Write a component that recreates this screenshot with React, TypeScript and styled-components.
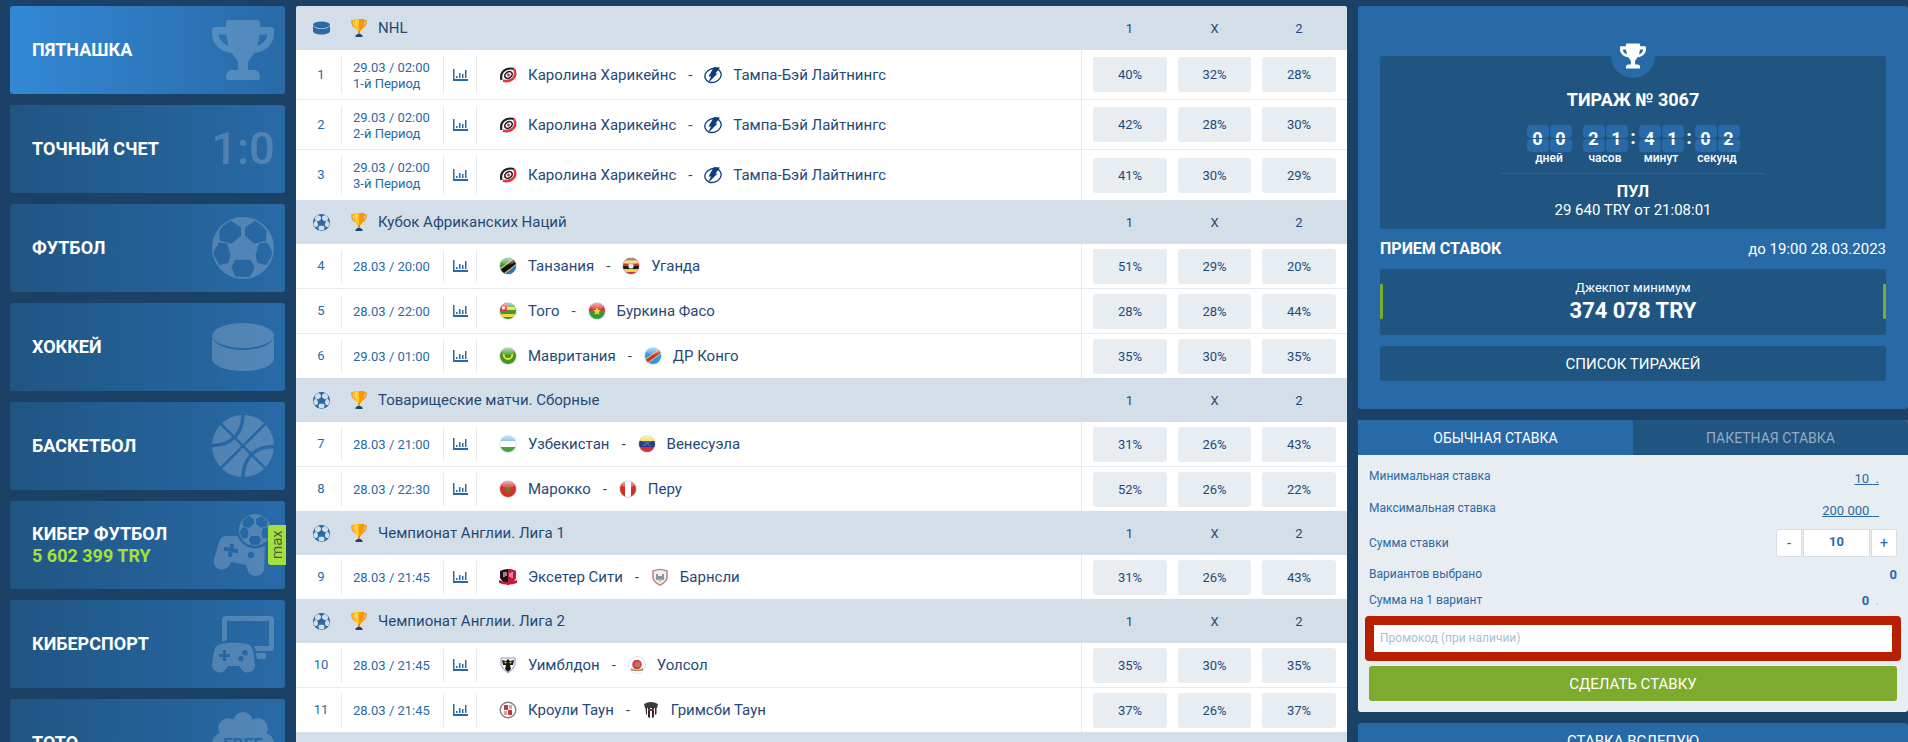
import React, { useId, useState } from "react";
import type { ReactNode } from "react";
import styled, { createGlobalStyle, css } from "styled-components";

const color = {
  page: "#1c4166",
  deep: "#205582",
  blue: "#286aa8",
  bright: "#3388d6",
  ink: "#1f4a78",
  head: "#d4dee8",
  pale: "#e8edf1",
  line: "#e6ebf0",
  lime: "#a4e03b",
  green: "#7dab2e",
  red: "#b81e00",
};

const GlobalStyle = createGlobalStyle`
  *, *::before, *::after { box-sizing: border-box; }
  body {
    margin: 0;
    background: ${color.page};
    font-family: Roboto, "Liberation Sans", sans-serif;
    font-size: 13px;
    color: ${color.ink};
  }
  button, input { font: inherit; color: inherit; margin: 0; }
  button { cursor: pointer; border: 0; padding: 0; }
  a { color: inherit; }
`;

const Page = styled.div`
  display: grid;
  grid-template-columns: 275px minmax(0, 1fr) 550px;
  gap: 11px;
  align-items: start;
  padding: 6px 0 0 10px;
`;

/* ---------- Sidebar ---------- */

const Nav = styled.nav`
  display: flex;
  flex-direction: column;
  gap: 11px;
`;

const NavCard = styled.a<{ $active?: boolean }>`
  position: relative;
  display: flex;
  align-items: center;
  justify-content: space-between;
  height: 88px;
  padding: 0 11px 0 22px;
  border-radius: 3px;
  background: linear-gradient(
    to right,
    ${(p) => (p.$active ? color.bright : color.deep)},
    ${color.blue}
  );
  color: #fff;
  font-size: 18px;
  font-weight: 700;
  line-height: 22px;
  text-decoration: none;
`;

const NavPrize = styled.span`
  display: block;
  color: ${color.lime};
`;

const NavIcon = styled.span`
  display: flex;
  align-items: center;
  justify-content: center;
  width: 62px;
  height: 62px;
  color: rgba(255, 255, 255, 0.2);
`;

const ScoreMark = styled.span`
  font-size: 45px;
  font-weight: 500;
`;

const MaxBadge = styled.span`
  position: absolute;
  right: -1px;
  top: 24px;
  width: 18px;
  height: 40px;
  display: flex;
  align-items: center;
  justify-content: center;
  border-radius: 0 3px 3px 0;
  background: ${color.lime};
  color: #4d5a45;
  font-size: 15px;
  font-weight: 400;
  line-height: 18px;
  writing-mode: vertical-rl;
  transform: rotate(180deg);
`;

/* ---------- Icons ---------- */

const TrophyIcon = ({ width, height }: { width: number; height: number }) => (
  <svg width={width} height={height} viewBox="0 0 62 60" fill="currentColor" aria-hidden>
    <path
      fillRule="evenodd"
      d="M17 0H45Q48 0 48 3V7H59Q62 7 62 10V15C61 25 53 32 42 33C40 37 37 39 36 42V50H42Q48 50 48 58Q48 60 46 60H16Q14 60 14 58Q14 50 20 50H26V42C25 39 22 37 20 33C9 32 1 25 0 15V10Q0 7 3 7H14V3Q14 0 17 0ZM7 14.500V16C8 21 12 24.500 17 26C15.500 22 14.500 18 14.300 14.500ZM55 14.500H47.700C47.500 18 46.500 22 45 26C50 24.500 54 21 55 16Z"
    />
  </svg>
);

const ballPath =
  "M31 0A31 31 0 1 1 30.990 0ZM33 10.300L43 3.800Q51 8 54.700 14L54 23.700L42.300 26.700L33 18.700ZM29 10.300L19 3.800Q11 8 7.300 14L8 23.700L19.700 26.700L29 18.700ZM43.500 38L47 26.500L55 25.500L60 34L59.700 39L54.700 48L45.300 46ZM18.500 38L15 26.500L7 25.500L2 34L2.300 39L7.300 48L16.700 46ZM23.500 42.700H38.500L42.700 50.300L38.500 59.700H23.500L19.300 50.300Z";

const BallIcon = ({ size }: { size: number }) => (
  <svg width={size} height={size} viewBox="0 0 62 62" fill="currentColor" aria-hidden>
    <path fillRule="evenodd" d={ballPath} />
  </svg>
);

const PuckIcon = ({ width, height }: { width: number; height: number }) => (
  <svg width={width} height={height} viewBox="0 0 62 48" fill="currentColor" aria-hidden>
    <ellipse cx="31" cy="12.500" rx="31" ry="12.500" />
    <path d="M0 14.500C3 22 15 27 31 27S59 22 62 14.500V36C61 43 48 48 31 48S1 43 0 36Z" />
  </svg>
);

const BasketballIcon = () => {
  const id = useId();
  return (
    <svg width="62" height="62" viewBox="0 0 62 62" aria-hidden>
      <mask id={id}>
        <circle cx="31" cy="31" r="31" fill="#fff" />
        <g fill="none" stroke="#000">
          <path strokeWidth="2.500" d="M8 8L54 54M54 8L8 54" />
          <path strokeWidth="3.500" d="M31 -1C31 17 21 31 -1 30.500M31 63C31 45 41 31 63 31.500" />
        </g>
      </mask>
      <rect width="62" height="62" fill="currentColor" mask={`url(#${id})`} />
    </svg>
  );
};

const CyberBallIcon = () => {
  const id = useId();
  return (
    <svg width="62" height="62" viewBox="0 0 62 62" aria-hidden>
      <mask id={id}>
        <path
          fill="#fff"
          d="M14 22H26Q40 31 53 32L52 56C51 63 38 64 36 57L34 51L19 48C16 55 12 56 8 55C3 54 1 50 2 45L7 28Q9 22 14 22Z"
        />
        <g fill="#000">
          <circle cx="43" cy="16" r="18.500" />
          <circle cx="39" cy="41" r="3.200" />
          <path d="M17 30h4v4h5v4h-5v5h-4v-5h-5v-4h5Z" transform="rotate(10 19 36)" />
        </g>
      </mask>
      <rect width="62" height="62" fill="currentColor" mask={`url(#${id})`} />
      <g transform="translate(27 0) scale(0.516)">
        <path fill="currentColor" fillRule="evenodd" d={ballPath} />
      </g>
    </svg>
  );
};

const CyberSportIcon = () => (
  <svg width="62" height="62" viewBox="0 0 62 62" fill="currentColor" aria-hidden>
    <path d="M14 3H58Q62 3 62 7V34Q62 38 58 38H44L42 33H57V8H15V27L10 29V7Q10 3 14 3Z" />
    <path d="M44 40H52Q54 40 54 43T52 46H45Z" />
    <path
      fillRule="evenodd"
      d="M9 31Q21 28 35 31Q40 32 41 38L43 52C43 59 34 62 30 57L27 53H16L13 57C9 62 0 59 0 52L2 38Q3 32 9 31ZM11 37V41H7V44H11V48H14V44H18V41H14V37ZM33 37A2.800 2.800 0 1 0 33.010 37ZM29 43A2.800 2.800 0 1 0 29.010 43Z"
    />
  </svg>
);

const FreeText = styled.text`
  font-size: 17px;
  font-weight: 900;
`;

const FreeIcon = () => {
  const id = useId();
  const lobes = Array.from({ length: 8 }, (_, i) => {
    const a = (i * Math.PI) / 4 - Math.PI / 2;
    return { x: 31 + 21 * Math.cos(a), y: 31 + 21 * Math.sin(a) };
  });
  return (
    <svg width="62" height="62" viewBox="0 0 62 62" aria-hidden>
      <mask id={id}>
        <circle cx="31" cy="31" r="25" fill="#fff" />
        {lobes.map((l, i) => (
          <circle key={i} cx={l.x} cy={l.y} r="10" fill="#fff" />
        ))}
        <FreeText x="31" y="38" textAnchor="middle" fill="#000">
          FREE
        </FreeText>
      </mask>
      <rect width="62" height="62" fill="currentColor" mask={`url(#${id})`} />
    </svg>
  );
};

const CupIcon = () => (
  <svg width="16" height="18" viewBox="0 0 16 18" aria-hidden>
    <path d="M3.500 2H1Q.5 7 5.500 9M12.500 2H15Q15.500 7 10.500 9" fill="none" stroke="#f79a10" strokeWidth="1.500" />
    <path d="M2.500 0H8V12.500H7Q2.500 9 2.500 0Z" fill="#ffc61a" />
    <path d="M8 0H13.500Q13.500 9 9 12.500H8Z" fill="#ff9500" />
    <path d="M4.500 1.500H6Q5.500 6 7 9Q4.700 6 4.500 1.500Z" fill="#ffe680" />
    <path d="M7 12H9V15H7Z" fill="#f08a00" />
    <path d="M4.500 18V16.500L6.500 15H9.500L11.500 16.500V18Z" fill="#1f4573" />
  </svg>
);

const ChartIcon = () => (
  <svg width="15" height="12" viewBox="0 0 15 12" fill={color.blue} aria-hidden>
    <path d="M0 0H1.500V10H15V12H0ZM3 7H4.500V9H3ZM6 4H7.500V9H6ZM9 5H10.500V9H9ZM12 1H13.500V9H12Z" />
  </svg>
);

/* ---------- Team marks ---------- */

type Mark = { plain?: boolean; art: ReactNode };

const marks: Record<string, Mark> = {
  "Каролина Харикейнс": {
    plain: true,
    art: (
      <g fill="none">
        <path d="M2.500 14Q.5 6 8 3Q12 2 15 3" stroke="#222" strokeWidth="2.200" />
        <path d="M15 3Q18.500 10 12 14Q8 16 4 14.500" stroke="#e03a3e" strokeWidth="2.600" />
        <ellipse cx="9.500" cy="9" rx="4" ry="3" stroke="#222" strokeWidth="1.600" transform="rotate(-35 9.500 9)" />
        <circle cx="9.500" cy="9" r="1.600" fill="#e03a3e" />
      </g>
    ),
  },
  "Тампа-Бэй Лайтнингс": {
    plain: true,
    art: (
      <g>
        <ellipse cx="9" cy="9.500" rx="8.300" ry="6.800" fill="#fff" stroke="#0b3c7d" strokeWidth="1.300" transform="rotate(-20 9 9.500)" />
        <path d="M10 1L16 1.500L11.500 7.500H13.500L4 17L7 10.500H4.500Z" fill="#0b3c7d" />
      </g>
    ),
  },
  Танзания: {
    art: (
      <g>
        <rect width="18" height="18" fill="#3f9b3f" />
        <path d="M18 3V18H3Z" fill="#2f6fbf" />
        <path d="M0 17L18 3" stroke="#f4d63c" strokeWidth="7" />
        <path d="M0 17L18 3" stroke="#111" strokeWidth="5" />
      </g>
    ),
  },
  Уганда: {
    art: (
      <g>
        <rect width="18" height="18" fill="#d8302c" />
        <path d="M0 0H18V3.500H0ZM0 9H18V12H0Z" fill="#1b1b1b" />
        <path d="M0 3.500H18V6.500H0ZM0 12H18V15H0Z" fill="#f5d038" />
        <circle cx="9" cy="9" r="2.600" fill="#eee" />
      </g>
    ),
  },
  Того: {
    art: (
      <g>
        <rect width="18" height="18" fill="#3e9a35" />
        <path d="M0 5H18V8H0ZM0 12H18V15H0Z" fill="#f4d93c" />
        <path d="M0 0H8V9H0Z" fill="#df3540" />
        <circle cx="4.500" cy="6" r="1.500" fill="#fff" />
      </g>
    ),
  },
  "Буркина Фасо": {
    art: (
      <g>
        <rect width="18" height="9" fill="#d8302c" />
        <rect y="9" width="18" height="9" fill="#379a34" />
        <path d="M9 5L10.200 8H13L10.700 10L11.600 13L9 11.200L6.400 13L7.300 10L5 8H7.800Z" fill="#f8d836" />
      </g>
    ),
  },
  Мавритания: {
    art: (
      <g>
        <rect width="18" height="18" fill="#3f9a1e" />
        <path d="M4.500 7Q5 12 9 12T13.500 7" fill="none" stroke="#f0e03a" strokeWidth="1.800" />
      </g>
    ),
  },
  "ДР Конго": {
    art: (
      <g>
        <rect width="18" height="18" fill="#2b9bea" />
        <path d="M0 16L18 3" stroke="#f5d83d" strokeWidth="5" />
        <path d="M0 16L18 3" stroke="#d52b35" strokeWidth="3.400" />
      </g>
    ),
  },
  Узбекистан: {
    art: (
      <g>
        <rect width="18" height="18" fill="#fff" />
        <rect width="18" height="6" fill="#6fb3e0" />
        <rect y="12" width="18" height="6" fill="#4ca33c" />
      </g>
    ),
  },
  Венесуэла: {
    art: (
      <g>
        <rect width="18" height="18" fill="#f6d23a" />
        <rect y="6" width="18" height="6" fill="#233f91" />
        <rect y="12" width="18" height="6" fill="#d5303a" />
        <path d="M6 10.500Q9 7 12 10.500" fill="none" stroke="#fff" strokeWidth=".7" strokeDasharray="1 .6" />
      </g>
    ),
  },
  Марокко: {
    art: (
      <g>
        <rect width="18" height="18" fill="#d3302c" />
        <path d="M9 5.500L10.200 8.500H13L10.700 10.300L11.600 13.300L9 11.500L6.400 13.300L7.300 10.300L5 8.500H7.800Z" fill="#4f8a2a" />
      </g>
    ),
  },
  Перу: {
    art: (
      <g>
        <rect width="18" height="18" fill="#d52b25" />
        <rect x="6" width="6" height="18" fill="#fff" />
      </g>
    ),
  },
  "Эксетер Сити": {
    plain: true,
    art: (
      <g>
        <path d="M1 3Q9 -1 17 3V10Q14 15 9 17Q4 15 1 10Z" fill="#1a1418" />
        <path d="M9 1.500Q13 1 17 3V10Q14 15 9 17Z" fill="#c8163c" />
        <path d="M5 4V9M7 4V8M11 5V9M13 4V10" stroke="#e8d8dc" strokeWidth="1.200" />
        <path d="M0 12Q9 16 18 12V15Q9 18 0 15Z" fill="#c8163c" />
      </g>
    ),
  },
  Барнсли: {
    plain: true,
    art: (
      <g>
        <path d="M2 3Q9 0 16 3V10Q14 15 9 17Q4 15 2 10Z" fill="#f2f0f2" stroke="#b98a90" strokeWidth="1.600" />
        <path d="M5 6H7V8H11V6H13V12H5Z" fill="#8a94a4" />
        <path d="M6 11H12L9 14Z" fill="#d8b64a" />
      </g>
    ),
  },
  Уимблдон: {
    plain: true,
    art: (
      <g>
        <path d="M2 2H16V9Q14 14 9 17Q4 14 2 9Z" fill="#fff" stroke="#8d98a8" />
        <path d="M9 3L11 5L15 4L14 9L11 9L12 13L9 16L6 13L7 9L4 9L3 4L7 5Z" fill="#16161c" />
        <circle cx="6.500" cy="6.500" r="1" fill="#e8cf3a" />
        <circle cx="11.500" cy="6.500" r="1" fill="#e8cf3a" />
      </g>
    ),
  },
  Уолсол: {
    plain: true,
    art: (
      <g>
        <circle cx="9" cy="9" r="8.500" fill="#fff" stroke="#dde3ea" />
        <circle cx="9" cy="8.500" r="4.800" fill="#e03850" />
        <circle cx="9.500" cy="8.500" r="2.600" fill="#a88462" />
        <path d="M3 12Q9 15 15 12V14.500Q9 16 3 14.500Z" fill="#a9985c" />
      </g>
    ),
  },
  "Кроули Таун": {
    plain: true,
    art: (
      <g>
        <circle cx="9" cy="9" r="7.800" fill="#fff" stroke="#8a7f84" strokeWidth="1.400" />
        <path d="M5 4H9V9H5ZM9 9H13V14H9Z" fill="#c43a3c" />
        <path d="M10 4H13V8H10ZM5 10H8V14H5Z" fill="#d8a0a0" />
      </g>
    ),
  },
  "Гримсби Таун": {
    plain: true,
    art: (
      <g>
        <path d="M2 3Q9 -1 16 3L15 7H3Z" fill="#3b3b3f" />
        <path d="M3.500 7H5V14L4 13ZM6 7H8V17L6 16ZM10 7H12V16L10 17ZM13 7H14.500V13L13 14Z" fill="#2d2a2e" />
        <path d="M6 8H12V10H6Z" fill="#8e2a3c" />
      </g>
    ),
  },
};

const TeamMark = ({ team }: { team: string }) => {
  const id = useId();
  const mark = marks[team];
  return (
    <svg width="18" height="18" viewBox="0 0 18 18" aria-hidden>
      <clipPath id={`${id}c`}>
        <circle cx="9" cy="9" r="8" />
      </clipPath>
      <linearGradient id={`${id}g`} x1="0" y1="0" x2="0" y2="1">
        <stop offset="0" stopColor="#fff" stopOpacity=".7" />
        <stop offset="1" stopColor="#fff" stopOpacity=".1" />
      </linearGradient>
      {mark.plain ? (
        mark.art
      ) : (
        <g>
          <circle cx="9" cy="9" r="9" fill="#dfe5ea" />
          <g clipPath={`url(#${id}c)`}>
            {mark.art}
            <ellipse cx="9" cy="4" rx="7" ry="4" fill={`url(#${id}g)`} />
          </g>
        </g>
      )}
    </svg>
  );
};

/* ---------- Match table ---------- */

const Matches = styled.table`
  width: 100%;
  table-layout: fixed;
  border-collapse: separate;
  border-spacing: 0;
  border-radius: 3px 3px 0 0;
  overflow: hidden;
  background: #fff;
`;

const Col = styled.col<{ $w?: number }>`
  width: ${(p) => (p.$w ? `${p.$w}px` : "auto")};
`;

const GroupRow = styled.tr`
  height: 44px;
  background: ${color.head};
`;

const GroupHead = styled.th`
  padding: 0 0 0 17px;
  text-align: left;
  font-weight: 400;
`;

const GroupTitle = styled.div`
  display: grid;
  grid-template-columns: 17px 16px 1fr;
  column-gap: 12px;
  align-items: center;
  font-size: 15px;
  line-height: 20px;

  > :first-child {
    color: ${color.blue};
  }
  > :nth-child(2) {
    justify-self: end;
    margin-right: -9px;
  }
  > :last-child {
    padding-left: 8px;
  }
`;

const cellSides = css`
  padding: 0 0 0 11px;
  &:last-child {
    padding-right: 11px;
  }
`;

const OutcomeHead = styled.th`
  ${cellSides}
  font-weight: 400;
`;

const MatchRow = styled.tr<{ $tall?: boolean }>`
  height: ${(p) => (p.$tall ? 50 : 45)}px;

  &:last-child {
    height: ${(p) => (p.$tall ? 50 : 44)}px;
  }
  &:not(:last-child) > td {
    border-bottom: 1px solid ${color.line};
  }
`;

const Cell = styled.td`
  padding: 0;
`;

const Inset = styled.div<{ $tall?: boolean }>`
  display: flex;
  align-items: center;
  height: ${(p) => (p.$tall ? 38 : 33)}px;
  border-right: 1px solid ${color.line};
  color: ${color.blue};
  line-height: 16px;
`;

const NumberInset = styled(Inset)`
  justify-content: center;
  padding-left: 5px;
`;

const DateInset = styled(Inset)`
  padding: 2px 0 0 11px;
`;

const StatsButton = styled.button`
  display: flex;
  margin: 0 auto;
  background: none;
`;

const Pair = styled.div`
  display: flex;
  align-items: center;
  padding-left: 22px;
  font-size: 15px;
  line-height: 20px;
  white-space: nowrap;
`;

const TeamName = styled.span`
  margin-left: 11px;
`;

const Dash = styled.span`
  width: 28px;
  text-align: center;
`;

const OddsCell = styled.td`
  ${cellSides}
  &:nth-child(5) {
    border-left: 1px solid ${color.line};
  }
`;

const OddsButton = styled.button`
  display: block;
  width: 100%;
  height: 35px;
  border-radius: 3px;
  background: ${color.pale};
`;

type Match = { date: string; period?: string; home: string; away: string; odds: [number, number, number] };
type Group = { title: string; puck?: boolean; first: number; matches: Match[] };

const nhl = (period: string, odds: [number, number, number]): Match => ({
  date: "29.03 / 02:00",
  period,
  home: "Каролина Харикейнс",
  away: "Тампа-Бэй Лайтнингс",
  odds,
});

const groups: Group[] = [
  {
    title: "NHL",
    puck: true,
    first: 1,
    matches: [nhl("1-й Период", [40, 32, 28]), nhl("2-й Период", [42, 28, 30]), nhl("3-й Период", [41, 30, 29])],
  },
  {
    title: "Кубок Африканских Наций",
    first: 4,
    matches: [
      { date: "28.03 / 20:00", home: "Танзания", away: "Уганда", odds: [51, 29, 20] },
      { date: "28.03 / 22:00", home: "Того", away: "Буркина Фасо", odds: [28, 28, 44] },
      { date: "29.03 / 01:00", home: "Мавритания", away: "ДР Конго", odds: [35, 30, 35] },
    ],
  },
  {
    title: "Товарищеские матчи. Сборные",
    first: 7,
    matches: [
      { date: "28.03 / 21:00", home: "Узбекистан", away: "Венесуэла", odds: [31, 26, 43] },
      { date: "28.03 / 22:30", home: "Марокко", away: "Перу", odds: [52, 26, 22] },
    ],
  },
  {
    title: "Чемпионат Англии. Лига 1",
    first: 9,
    matches: [{ date: "28.03 / 21:45", home: "Эксетер Сити", away: "Барнсли", odds: [31, 26, 43] }],
  },
  {
    title: "Чемпионат Англии. Лига 2",
    first: 10,
    matches: [
      { date: "28.03 / 21:45", home: "Уимблдон", away: "Уолсол", odds: [35, 30, 35] },
      { date: "28.03 / 21:45", home: "Кроули Таун", away: "Гримсби Таун", odds: [37, 26, 37] },
    ],
  },
];

const MatchTable = () => (
  <Matches>
    <colgroup>
      <Col $w={46} />
      <Col $w={102} />
      <Col $w={33} />
      <Col />
      <Col $w={86} />
      <Col $w={84} />
      <Col $w={96} />
    </colgroup>
    {groups.map((g) => (
      <tbody key={g.title}>
        <GroupRow>
          <GroupHead colSpan={4} scope="colgroup">
            <GroupTitle>
              {g.puck ? <PuckIcon width={17} height={14} /> : <BallIcon size={17} />}
              <CupIcon />
              <span>{g.title}</span>
            </GroupTitle>
          </GroupHead>
          <OutcomeHead scope="col">1</OutcomeHead>
          <OutcomeHead scope="col">X</OutcomeHead>
          <OutcomeHead scope="col">2</OutcomeHead>
        </GroupRow>
        {g.matches.map((m, i) => {
          const tall = Boolean(m.period);
          return (
            <MatchRow key={i} $tall={tall}>
              <Cell>
                <NumberInset $tall={tall}>{g.first + i}</NumberInset>
              </Cell>
              <Cell>
                <DateInset $tall={tall}>
                  <div>
                    {m.date}
                    {m.period && <div>{m.period}</div>}
                  </div>
                </DateInset>
              </Cell>
              <Cell>
                <Inset $tall={tall}>
                  <StatsButton type="button" aria-label="Статистика">
                    <ChartIcon />
                  </StatsButton>
                </Inset>
              </Cell>
              <Cell>
                <Pair>
                  <TeamMark team={m.home} />
                  <TeamName>{m.home}</TeamName>
                  <Dash>-</Dash>
                  <TeamMark team={m.away} />
                  <TeamName>{m.away}</TeamName>
                </Pair>
              </Cell>
              {m.odds.map((o, k) => (
                <OddsCell key={k}>
                  <OddsButton type="button">{o}%</OddsButton>
                </OddsCell>
              ))}
            </MatchRow>
          );
        })}
      </tbody>
    ))}
    <tbody>
      <GroupRow>
        <GroupHead colSpan={7} />
      </GroupRow>
    </tbody>
  </Matches>
);

/* ---------- Right column ---------- */

const Aside = styled.aside`
  display: flex;
  flex-direction: column;
  gap: 11px;
`;

const DrawCard = styled.section`
  display: flex;
  flex-direction: column;
  padding: 50px 22px 28px;
  border-radius: 3px;
  background: ${color.blue};
  color: #fff;
`;

const DrawBox = styled.div`
  position: relative;
  display: flex;
  flex-direction: column;
  align-items: center;
  height: 173px;
  padding-top: 33px;
  border-radius: 3px;
  background: ${color.deep};
`;

const DrawMedal = styled.span`
  position: absolute;
  top: -22px;
  left: 50%;
  display: flex;
  align-items: center;
  justify-content: center;
  width: 44px;
  height: 44px;
  margin-left: -22px;
  border-radius: 50%;
  background: ${color.blue};
`;

const DrawTitle = styled.h2`
  margin: 0;
  font-size: 18px;
  line-height: 22px;
`;

const Countdown = styled.div`
  display: flex;
  margin-top: 14px;
`;

const Unit = styled.div`
  display: grid;
  grid-template-columns: 22px 22px;
  column-gap: 1px;
  justify-items: center;
  font-size: 12px;
  font-weight: 500;
  line-height: 13px;
`;

const UnitLabel = styled.span`
  grid-column: 1 / -1;
`;

const Separator = styled.span`
  width: 11px;
  text-align: center;
  font-size: 20px;
  font-weight: 700;
  line-height: 24px;
`;

const Tile = styled.span`
  position: relative;
  display: grid;
  grid-template-rows: 13px 13px;
  row-gap: 1px;
  width: 22px;

  &::before,
  &::after {
    content: "";
    grid-column: 1;
    border-radius: 4px;
    background: ${color.blue};
  }
`;

const Digit = styled.span`
  position: absolute;
  inset: 0;
  text-align: center;
  font-size: 18px;
  font-weight: 700;
  line-height: 27px;
  z-index: 1;

  &::after {
    content: "";
    position: absolute;
    inset: 13px 0 auto;
    height: 1px;
    background: ${color.deep};
  }
`;

const Pool = styled.div`
  width: 264px;
  margin-top: 8px;
  padding-top: 9px;
  border-top: 1px solid #36618c;
  text-align: center;
  font-size: 15px;
  line-height: 18px;
`;

const Deadline = styled.div`
  display: flex;
  justify-content: space-between;
  padding: 11px 0;
  font-size: 15px;
  line-height: 18px;
`;

const Strong = styled.strong`
  font-size: 16px;
`;

const Jackpot = styled.div`
  position: relative;
  height: 66px;
  padding-top: 9px;
  border-radius: 3px;
  background: ${color.deep};
  text-align: center;
  line-height: 20px;

  &::before,
  &::after {
    content: "";
    position: absolute;
    top: 15px;
    left: 0;
    width: 3px;
    height: 35px;
    border-radius: 1px;
    background: ${color.green};
  }
  &::after {
    left: auto;
    right: 0;
  }
`;

const JackpotSum = styled.strong`
  display: block;
  font-size: 22px;
  line-height: 26px;
`;

const DrawListButton = styled.button`
  height: 35px;
  margin-top: 11px;
  border-radius: 3px;
  background: ${color.deep};
  color: #fff;
  font-size: 15px;
`;

const BetCard = styled.section`
  overflow: hidden;
  border-radius: 3px;
  background: ${color.pale};
`;

const Tabs = styled.div`
  display: grid;
  grid-template-columns: 1fr 1fr;
`;

const Tab = styled.button<{ $active?: boolean }>`
  height: 35px;
  background: ${(p) => (p.$active ? color.blue : color.deep)};
  color: ${(p) => (p.$active ? "#fff" : "#94abc1")};
  font-size: 14px;
`;

const BetForm = styled.form`
  display: flex;
  flex-direction: column;
  padding: 5px 11px 11px;
  color: ${color.blue};
  font-size: 12px;
`;

const BetLine = styled.div<{ $h: number }>`
  display: flex;
  align-items: center;
  justify-content: space-between;
  height: ${(p) => p.$h}px;
`;

const LimitLink = styled.a`
  padding-top: 5px;
  margin-right: 18px;
  color: ${color.blue};
  font-size: 13px;
  white-space: pre;
`;

const Stepper = styled.div`
  display: grid;
  grid-template-columns: 26px 67px 26px;
  gap: 1px;
  height: 28px;
`;

const StepButton = styled.button<{ $side: "left" | "right" }>`
  border: 1px solid ${color.head};
  border-radius: ${(p) => (p.$side === "left" ? "3px 0 0 3px" : "0 3px 3px 0")};
  background: #fff;
  font-size: 15px;
  line-height: 18px;
`;

const StakeInput = styled.input`
  width: 100%;
  padding: 0 0 3px;
  border: 1px solid ${color.head};
  background: #fff;
  text-align: center;
  font-size: 13px;
  font-weight: 700;
`;

const Value = styled.strong<{ $inset?: boolean }>`
  font-size: 13px;
  margin-right: ${(p) => (p.$inset ? 18 : 0)}px;
  white-space: pre;
`;

const Faint = styled.span`
  color: #b9c3d6;
  font-weight: 400;
`;

const PromoInput = styled.input`
  height: 45px;
  margin: 3px -4px 5px;
  padding: 0 6px 2px;
  border: 9px solid ${color.red};
  border-radius: 4px;
  outline: 0;
  background: #fff;

  &::placeholder {
    color: #a9c0d6;
    opacity: 1;
  }
`;

const SubmitButton = styled.button`
  height: 35px;
  border-radius: 3px;
  background: ${color.green};
  color: #fff;
  font-size: 15px;
`;

const BlindButton = styled.button`
  height: 36px;
  border-radius: 3px;
  background: ${color.blue};
  color: #fff;
  font-size: 15px;
`;

const TimeUnit = ({ value, label }: { value: string; label: string }) => (
  <Unit>
    {[...value].map((d, i) => (
      <Tile key={i}>
        <Digit>{d}</Digit>
      </Tile>
    ))}
    <UnitLabel>{label}</UnitLabel>
  </Unit>
);

const DrawPanel = () => (
  <DrawCard>
    <DrawBox>
      <DrawMedal>
        <TrophyIcon width={26} height={26} />
      </DrawMedal>
      <DrawTitle>ТИРАЖ № 3067</DrawTitle>
      <Countdown>
        <TimeUnit value="00" label="дней" />
        <Separator />
        <TimeUnit value="21" label="часов" />
        <Separator>:</Separator>
        <TimeUnit value="41" label="минут" />
        <Separator>:</Separator>
        <TimeUnit value="02" label="секунд" />
      </Countdown>
      <Pool>
        <Strong>ПУЛ</Strong>
        <div>29 640 TRY от 21:08:01</div>
      </Pool>
    </DrawBox>
    <Deadline>
      <Strong>ПРИЕМ СТАВОК</Strong>
      <span>до 19:00 28.03.2023</span>
    </Deadline>
    <Jackpot>
      Джекпот минимум
      <JackpotSum>374 078 TRY</JackpotSum>
    </Jackpot>
    <DrawListButton type="button">СПИСОК ТИРАЖЕЙ</DrawListButton>
  </DrawCard>
);

const BetPanel = () => {
  const [stake, setStake] = useState(10);
  return (
    <BetCard>
      <Tabs role="tablist">
        <Tab type="button" role="tab" aria-selected $active>
          ОБЫЧНАЯ СТАВКА
        </Tab>
        <Tab type="button" role="tab" aria-selected={false}>
          ПАКЕТНАЯ СТАВКА
        </Tab>
      </Tabs>
      <BetForm onSubmit={(e) => e.preventDefault()}>
        <BetLine $h={32}>
          <span>Минимальная ставка</span>
          <LimitLink href="#min">10 {" ."}</LimitLink>
        </BetLine>
        <BetLine $h={32}>
          <span>Максимальная ставка</span>
          <LimitLink href="#max">200 000 {"  "}</LimitLink>
        </BetLine>
        <BetLine $h={37}>
          <label htmlFor="stake">Сумма ставки</label>
          <Stepper>
            <StepButton type="button" $side="left" onClick={() => setStake((s) => Math.max(0, s - 1))}>
              -
            </StepButton>
            <StakeInput id="stake" value={stake} onChange={(e) => setStake(Number(e.target.value) || 0)} />
            <StepButton type="button" $side="right" onClick={() => setStake((s) => s + 1)}>
              +
            </StepButton>
          </Stepper>
        </BetLine>
        <BetLine $h={26}>
          <span>Вариантов выбрано</span>
          <Value>0</Value>
        </BetLine>
        <BetLine $h={26}>
          <span>Сумма на 1 вариант</span>
          <Value $inset>
            0<Faint>{"  ."}</Faint>
          </Value>
        </BetLine>
        <PromoInput aria-label="Промокод" placeholder="Промокод (при наличии)" />
        <SubmitButton type="submit">СДЕЛАТЬ СТАВКУ</SubmitButton>
      </BetForm>
    </BetCard>
  );
};

/* ---------- Page ---------- */

type NavItem = { label: string; icon: ReactNode; prize?: string; active?: boolean };

const navItems: NavItem[] = [
  { label: "ПЯТНАШКА", icon: <TrophyIcon width={62} height={60} />, active: true },
  { label: "ТОЧНЫЙ СЧЕТ", icon: <ScoreMark>1:0</ScoreMark> },
  { label: "ФУТБОЛ", icon: <BallIcon size={62} /> },
  { label: "ХОККЕЙ", icon: <PuckIcon width={62} height={48} /> },
  { label: "БАСКЕТБОЛ", icon: <BasketballIcon /> },
  { label: "КИБЕР ФУТБОЛ", icon: <CyberBallIcon />, prize: "5 602 399 TRY" },
  { label: "КИБЕРСПОРТ", icon: <CyberSportIcon /> },
  { label: "ТОТО", icon: <FreeIcon /> },
];

export default function App() {
  return (
    <>
      <GlobalStyle />
      <Page>
        <Nav>
          {navItems.map((n) => (
            <NavCard key={n.label} href="#" $active={n.active}>
              <span>
                {n.label}
                {n.prize && <NavPrize>{n.prize}</NavPrize>}
              </span>
              <NavIcon>{n.icon}</NavIcon>
              {n.prize && <MaxBadge>max</MaxBadge>}
            </NavCard>
          ))}
        </Nav>
        <main>
          <MatchTable />
        </main>
        <Aside>
          <DrawPanel />
          <BetPanel />
          <BlindButton type="button">СТАВКА ВСЛЕПУЮ</BlindButton>
        </Aside>
      </Page>
    </>
  );
}
